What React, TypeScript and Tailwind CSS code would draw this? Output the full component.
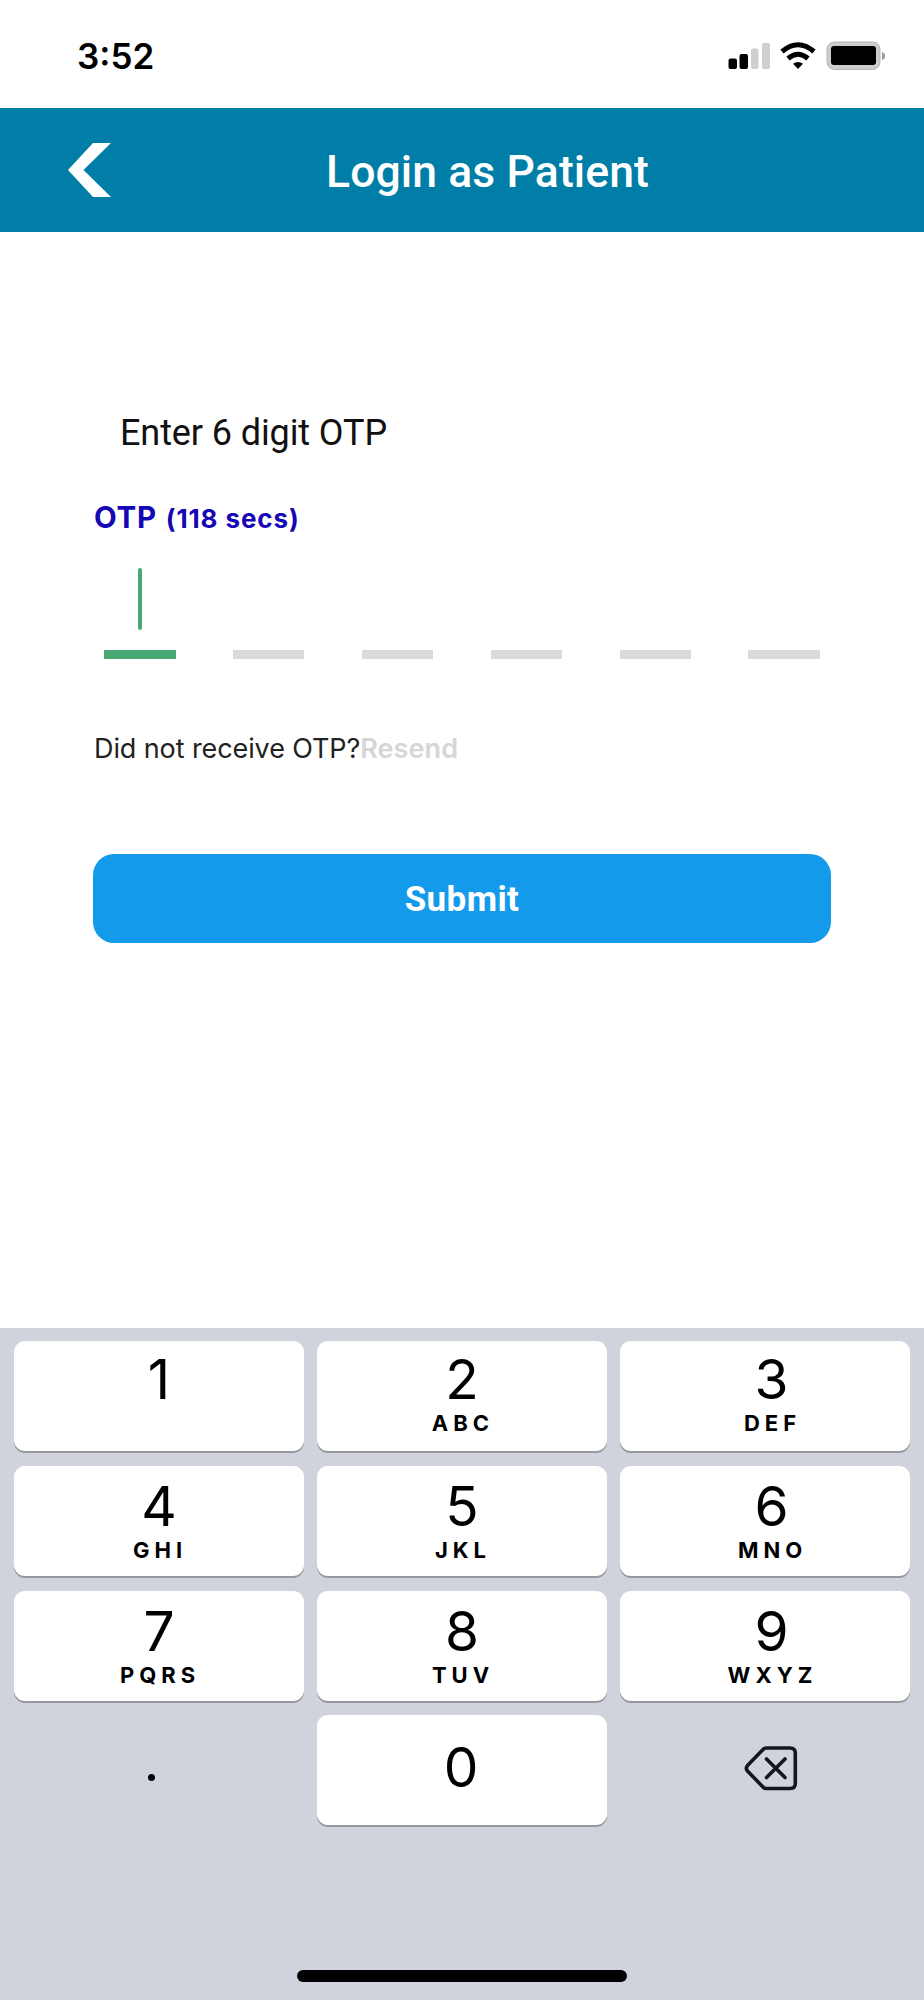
type KeyType = {
  digit: string;
  letters?: string;
};

const KEY_ROWS: KeyType[][] = [
  [{ digit: "1" }, { digit: "2", letters: "ABC" }, { digit: "3", letters: "DEF" }],
  [{ digit: "4", letters: "GHI" }, { digit: "5", letters: "JKL" }, { digit: "6", letters: "MNO" }],
  [{ digit: "7", letters: "PQRS" }, { digit: "8", letters: "TUV" }, { digit: "9", letters: "WXYZ" }],
];

const OTP_LENGTH = 6;

function StatusBar() {
  return (
    <div className="flex h-[107.5px] items-start justify-between pl-[77px] pr-[37px]">
      <span className="mt-[36px] text-[35px] font-semibold leading-[40px] text-black">3:52</span>
      <svg className="mt-[40px] h-[31px] w-[160px]" viewBox="727 40 160 31">
        {/* Signal */}
        <rect x="728.5" y="58.5" width="8.5" height="10.5" rx="2" fill="#000" />
        <rect x="739.5" y="54" width="8.5" height="15" rx="2" fill="#000" />
        <rect x="751" y="48.5" width="7.5" height="20.5" rx="2" fill="#cfcfcf" />
        <rect x="762" y="43" width="8" height="26" rx="2" fill="#cfcfcf" />
        {/* Wifi */}
        <g fill="none" stroke="#000" strokeWidth="5">
          <path d="M782 51.5Q798 38 814 51.5" />
          <path d="M788 58.5Q798 50 808 58.5" />
        </g>
        <path d="M793 63.8Q798 60 803 63.8L798 69Z" fill="#000" />
        {/* Battery */}
        <rect x="827" y="42" width="53" height="27.5" rx="7.5" fill="#cdcdcd" stroke="#b5b5b5" strokeWidth="1" />
        <rect x="831" y="46" width="45" height="19" rx="3" fill="#000" />
        <path d="M882 52Q885 53 885 56Q885 59 882 60Z" fill="#999" />
      </svg>
    </div>
  );
}

function Header() {
  return (
    <header className="flex h-[124px] items-center bg-[#007ea8] pl-[68px] font-['Roboto',sans-serif]">
      <svg className="h-[54px] w-[43px]" viewBox="0 0 43 54" fill="#fff">
        <path d="M25 0H43L15.5 27L43 54H25L0 27Z" />
      </svg>
      <h1 className="ml-[215px] mt-[4px] whitespace-nowrap text-[44.5px] font-medium leading-[54px] tracking-[0.1px] text-white">
        Login as Patient
      </h1>
    </header>
  );
}

function OtpForm() {
  return (
    <main className="flex h-[1096.5px] flex-col px-[93px] pt-[176px]">
      <p className="ml-[27px] font-['Roboto',sans-serif] text-[36px] leading-[50px] tracking-[-0.1px] text-[#111]">
        Enter 6 digit OTP
      </p>

      <p className="mt-[39px] flex items-baseline gap-[9px] pl-px leading-[40px] text-[#1607b5]">
        <span className="text-[29.5px] font-bold tracking-[0.7px]">OTP</span>
        <span className="text-[26px] font-bold tracking-[0.9px]">(118 secs)</span>
      </p>

      <div className="mt-[29px] flex h-[91px] justify-between pl-[11px] pr-[11px]">
        {Array.from({ length: OTP_LENGTH }).map((_, index) => (
          <div
            key={index}
            className={`flex w-[71.5px] flex-col items-center border-b-[9px] ${
              index === 0 ? "border-[#48a974]" : "border-[#dadada]"
            }`}
          >
            {index === 0 && <div className="h-[62px] w-[4.5px] rounded-sm bg-[#48a974]" />}
          </div>
        ))}
      </div>

      <p className="mt-[70px] flex pl-px text-[27px] leading-[40px] text-[#222]">
        <span className="tracking-[-0.1px]">Did not receive OTP?</span>
        <span className="font-semibold tracking-[0.1px] text-[#d6d6d6]">Resend</span>
      </p>

      <button className="mt-[85px] h-[89.5px] w-[738px] rounded-[21px] bg-[#149aeb] pt-[3px] font-['Roboto',sans-serif] text-[35px] font-bold tracking-[0.4px] text-white">
        Submit
      </button>
    </main>
  );
}

function BackspaceIcon() {
  return (
    <svg className="h-[46px] w-[54px]" viewBox="0 0 54 46" fill="none" stroke="#14161c" strokeWidth="3.6" strokeLinecap="round" strokeLinejoin="round">
      <path d="M22 3H46Q51.300 3 51.300 8V38.500Q51.300 43.500 46 43.500H22Q20.500 43.500 19.500 42.500L3.500 26Q1.200 23.300 3.500 20.600L19.500 4Q20.500 3 22 3Z" />
      <path d="M22.500 14L41 32.500M41 14L22.500 32.500" />
    </svg>
  );
}

function Keyboard() {
  return (
    <div className="flex h-[672px] flex-col bg-[#d0d3dc] pt-[13px]">
      <div className="flex flex-col gap-[14.8px] px-[14px]">
        {KEY_ROWS.map((row, rowIndex) => (
          <div key={rowIndex} className="grid grid-cols-3 gap-[13px]">
            {row.map((key, index) => (
              <button
                key={key.digit}
                className={`flex h-[110px] flex-col items-center rounded-[11px] bg-white text-black shadow-[0_2px_0_#96989d] ${
                  index === 2 ? "pl-[12px]" : "pr-[1px]"
                } ${rowIndex === 0 ? "pt-[8px]" : "pt-[10px]"}`}
              >
                <span className="text-[55px] leading-[60px] tracking-[-1px]">{key.digit}</span>
                {key.letters && (
                  <span className="-mt-[2px] pl-[3px] text-[22px] font-bold leading-[32px] tracking-[5px]">
                    {key.letters}
                  </span>
                )}
              </button>
            ))}
          </div>
        ))}
        <div className="grid grid-cols-3 gap-[13px]">
          <div className="flex h-[110px] justify-center pr-[15px] pt-[59px]">
            <div className="size-[7px] rounded-full bg-black" />
          </div>
          <button className="flex h-[110px] justify-center rounded-[11px] bg-white pr-[2px] pt-[22px] text-[55px] leading-[60px] text-black shadow-[0_2px_0_#96989d]">
            0
          </button>
          <div className="flex h-[110px] justify-center pl-[11px] pt-[30px]">
            <BackspaceIcon />
          </div>
        </div>
      </div>
      <div className="mx-auto mb-[18px] mt-auto h-[12px] w-[330px] rounded-full bg-black" />
    </div>
  );
}

export default function App() {
  return (
    <div className="h-[2000px] w-[924px] overflow-hidden bg-white font-['Inter',sans-serif]">
      <StatusBar />
      <Header />
      <OtpForm />
      <Keyboard />
    </div>
  );
}
